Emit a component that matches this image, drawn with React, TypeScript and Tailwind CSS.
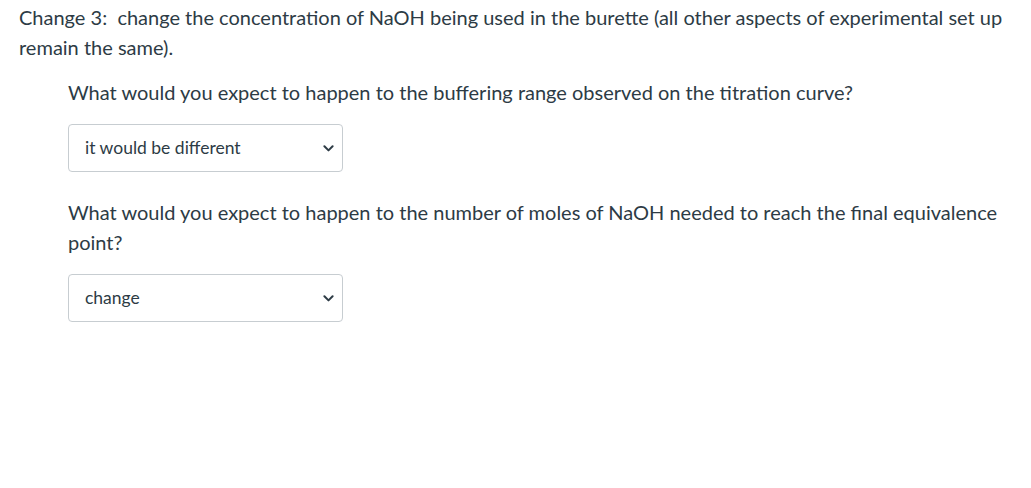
import React from 'react';

const Chevron = () => (
  <svg width="11" height="7" viewBox="0 0 11 7" className="shrink-0">
    <path d="M1.4 1.3 L5.5 5.4 L9.6 1.3" fill="none" stroke="#2d3b45" strokeWidth="2" strokeLinecap="round" strokeLinejoin="round" />
  </svg>
);

const FakeSelect = ({ value }: { value: string }) => (
  <div className="flex h-[48px] w-[275px] items-center justify-between rounded-[4px] border border-[#c7cdd1] bg-white pl-[16px] pr-[8px] text-[17.5px] text-[#2d3b45]">
    <span>{value}</span>
    <Chevron />
  </div>
);

export default function App() {
  return (
    <div
      className="min-h-[488px] bg-white pt-[2px] pl-[19px] pr-[14px] text-[20px] leading-[30px] text-[#2d3b45]"
      style={{ fontFamily: 'Lato, "Noto Sans", sans-serif' }}
    >
      <p className="whitespace-pre-wrap">
        {'Change 3:  change the concentration of NaOH being used in the burette (all other aspects of experimental set up remain the same).'}
      </p>
      <div className="pl-[49px]">
        <p className="mt-[15px]">What would you expect to happen to the buffering range observed on the titration curve?</p>
        <div className="mt-[17px]">
          <FakeSelect value="it would be different" />
        </div>
        <p className="mt-[25px]">
          What would you expect to happen to the number of moles of NaOH needed to reach the final equivalence point?
        </p>
        <div className="mt-[17px]">
          <FakeSelect value="change" />
        </div>
      </div>
    </div>
  );
}
